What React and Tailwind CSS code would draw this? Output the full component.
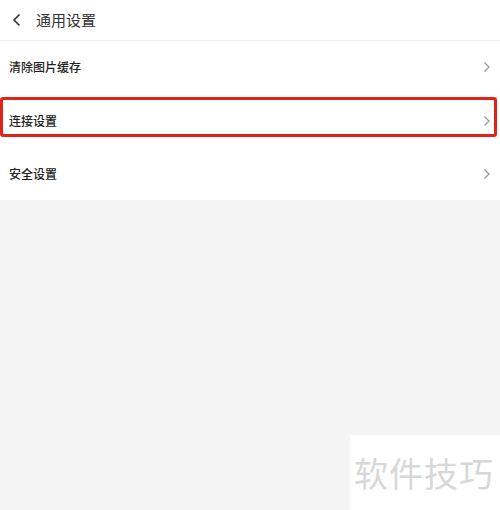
import React from 'react';

const font = { fontFamily: '"Noto Sans CJK SC", "Noto Sans", sans-serif' };

const Chevron = () => (
  <svg width="8" height="12" viewBox="0 0 8 12" fill="none" stroke="#9a9a9a" strokeWidth="1.3">
    <path d="M1.5 1.5 L6 6 L1.5 10.5" />
  </svg>
);

const Row = ({ label, active, height }) => (
  <div className={`${height} flex items-center`}>
    <div
      className={`flex-1 h-[40px] flex items-center justify-between pl-[6px] pr-[3px] mr-[3px] border-[3px] rounded-[3px] ${
        active ? 'border-[#e2231a] pt-[8px] mb-[6px]' : 'border-transparent'
      }`}
    >
      <span className="text-[12px] font-medium text-[#222]">{label}</span>
      <Chevron />
    </div>
  </div>
);

const App = () => {
  const items = [
    { label: '清除图片缓存', height: 'h-[52px]' },
    { label: '连接设置', height: 'h-[54px]', active: true },
    { label: '安全设置', height: 'h-[53px]' },
  ];
  return (
    <div className="w-[500px] h-[510px] bg-[#f4f4f4] flex flex-col" style={font}>
      <div className="bg-white">
        <div className="h-[41px] flex items-center border-b border-[#eeeeee]">
          <svg className="ml-[12px]" width="9" height="14" viewBox="0 0 9 14" fill="none" stroke="#333" strokeWidth="1.6">
            <path d="M7.5 1.5 L2 7 L7.5 12.5" />
          </svg>
          <span className="ml-[15px] text-[15px] text-[#333]">通用设置</span>
        </div>
        <div>
          {items.map((it) => (
            <Row key={it.label} label={it.label} active={it.active} height={it.height} />
          ))}
        </div>
      </div>
      <div className="flex-1 flex justify-end items-end">
        <div className="w-[150px] h-[75px] bg-white flex items-center justify-center pr-[2px]">
          <span className="text-[34px] leading-none text-[#d8d8d8] tracking-[1px]">软件技巧</span>
        </div>
      </div>
    </div>
  );
};

export default App;
